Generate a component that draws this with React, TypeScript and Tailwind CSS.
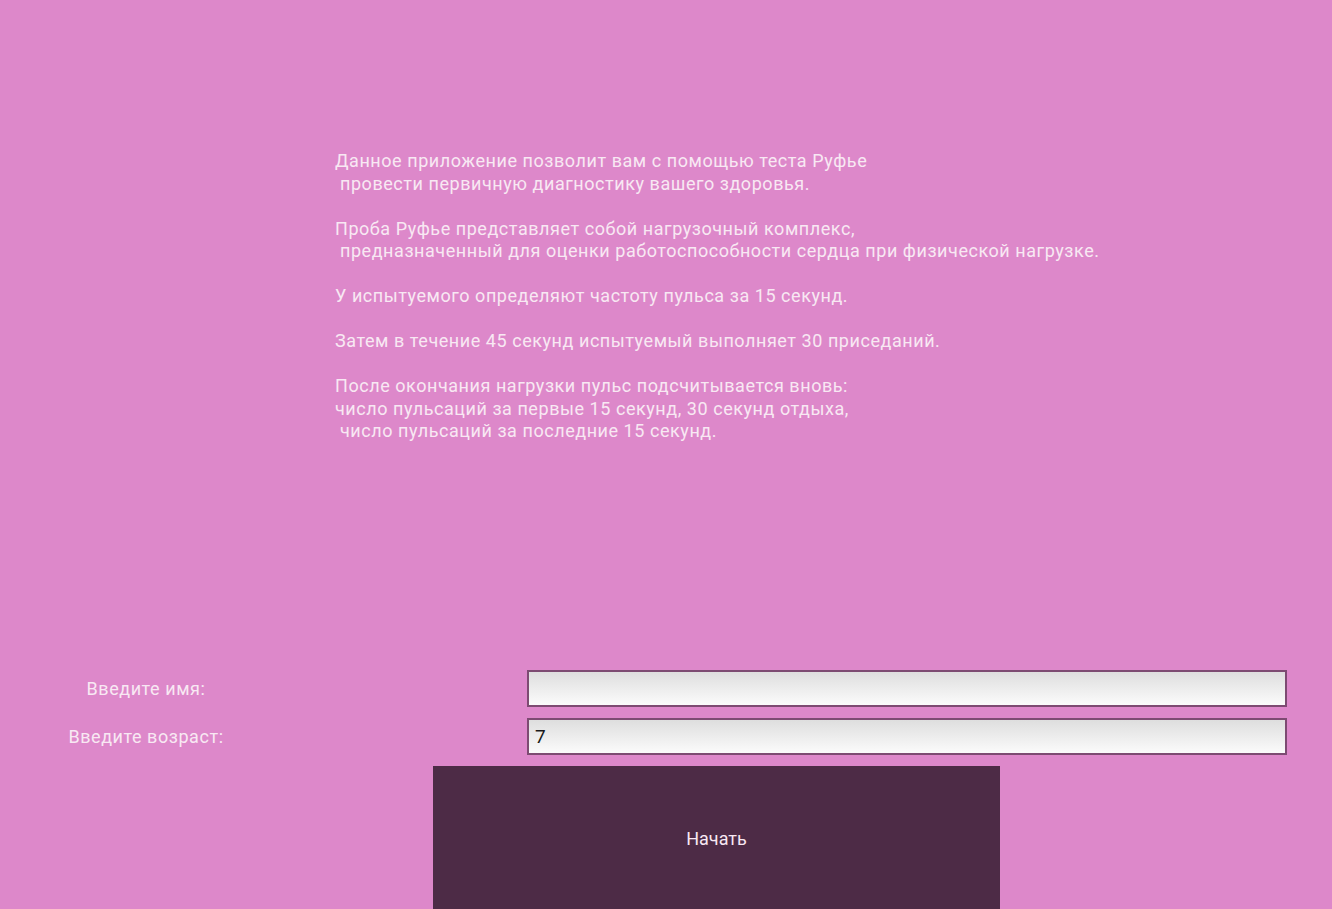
const lines = [
  'Данное приложение позволит вам с помощью теста Руфье',
  ' провести первичную диагностику вашего здоровья.',
  '',
  'Проба Руфье представляет собой нагрузочный комплекс,',
  ' предназначенный для оценки работоспособности сердца при физической нагрузке.',
  '',
  'У испытуемого определяют частоту пульса за 15 секунд.',
  '',
  'Затем в течение 45 секунд испытуемый выполняет 30 приседаний.',
  '',
  'После окончания нагрузки пульс подсчитывается вновь:',
  'число пульсаций за первые 15 секунд, 30 секунд отдыха,',
  ' число пульсаций за последние 15 секунд.',
];

export default function App() {
  return (
    <div
      className="h-[909px] w-full overflow-hidden bg-[#dd88ca] text-[#f8e8f3] tracking-[0.55px]"
      style={{ fontFamily: 'Roboto, "Noto Sans", sans-serif' }}
    >
      {/* Instructions */}
      <div className="pl-[335px] pt-[150px] h-[670px] text-[18px] leading-[22.5px] whitespace-pre">
        {lines.map((l, i) => (
          <div key={i} className="h-[22.5px]">{l}</div>
        ))}
      </div>

      {/* Form */}
      <div className="flex flex-col gap-[11px] pr-[45px]">
        <div className="flex items-center">
          <label className="w-[292px] text-center text-[18px]">Введите имя:</label>
          <input
            className="ml-[235px] flex-1 h-[37px] border-2 border-[#7d4b72] bg-gradient-to-b from-[#dedede] to-[#fbfbfb] px-[6px] text-[19px] tracking-normal text-[#1a1a1a] outline-none"
            defaultValue=""
          />
        </div>
        <div className="flex items-center">
          <label className="w-[292px] text-center text-[18px]">Введите возраст:</label>
          <input
            className="ml-[235px] flex-1 h-[37px] border-2 border-[#7d4b72] bg-gradient-to-b from-[#dedede] to-[#fbfbfb] px-[6px] text-[19px] tracking-normal text-[#1a1a1a] outline-none"
            defaultValue="7"
          />
        </div>
      </div>

      <div className="pl-[433px] pt-[11px]">
        <button className="w-[567px] h-[160px] pb-[16px] bg-[#4d2b46] text-[18px] tracking-normal text-[#f8e8f3]">
          Начать
        </button>
      </div>
    </div>
  );
}
